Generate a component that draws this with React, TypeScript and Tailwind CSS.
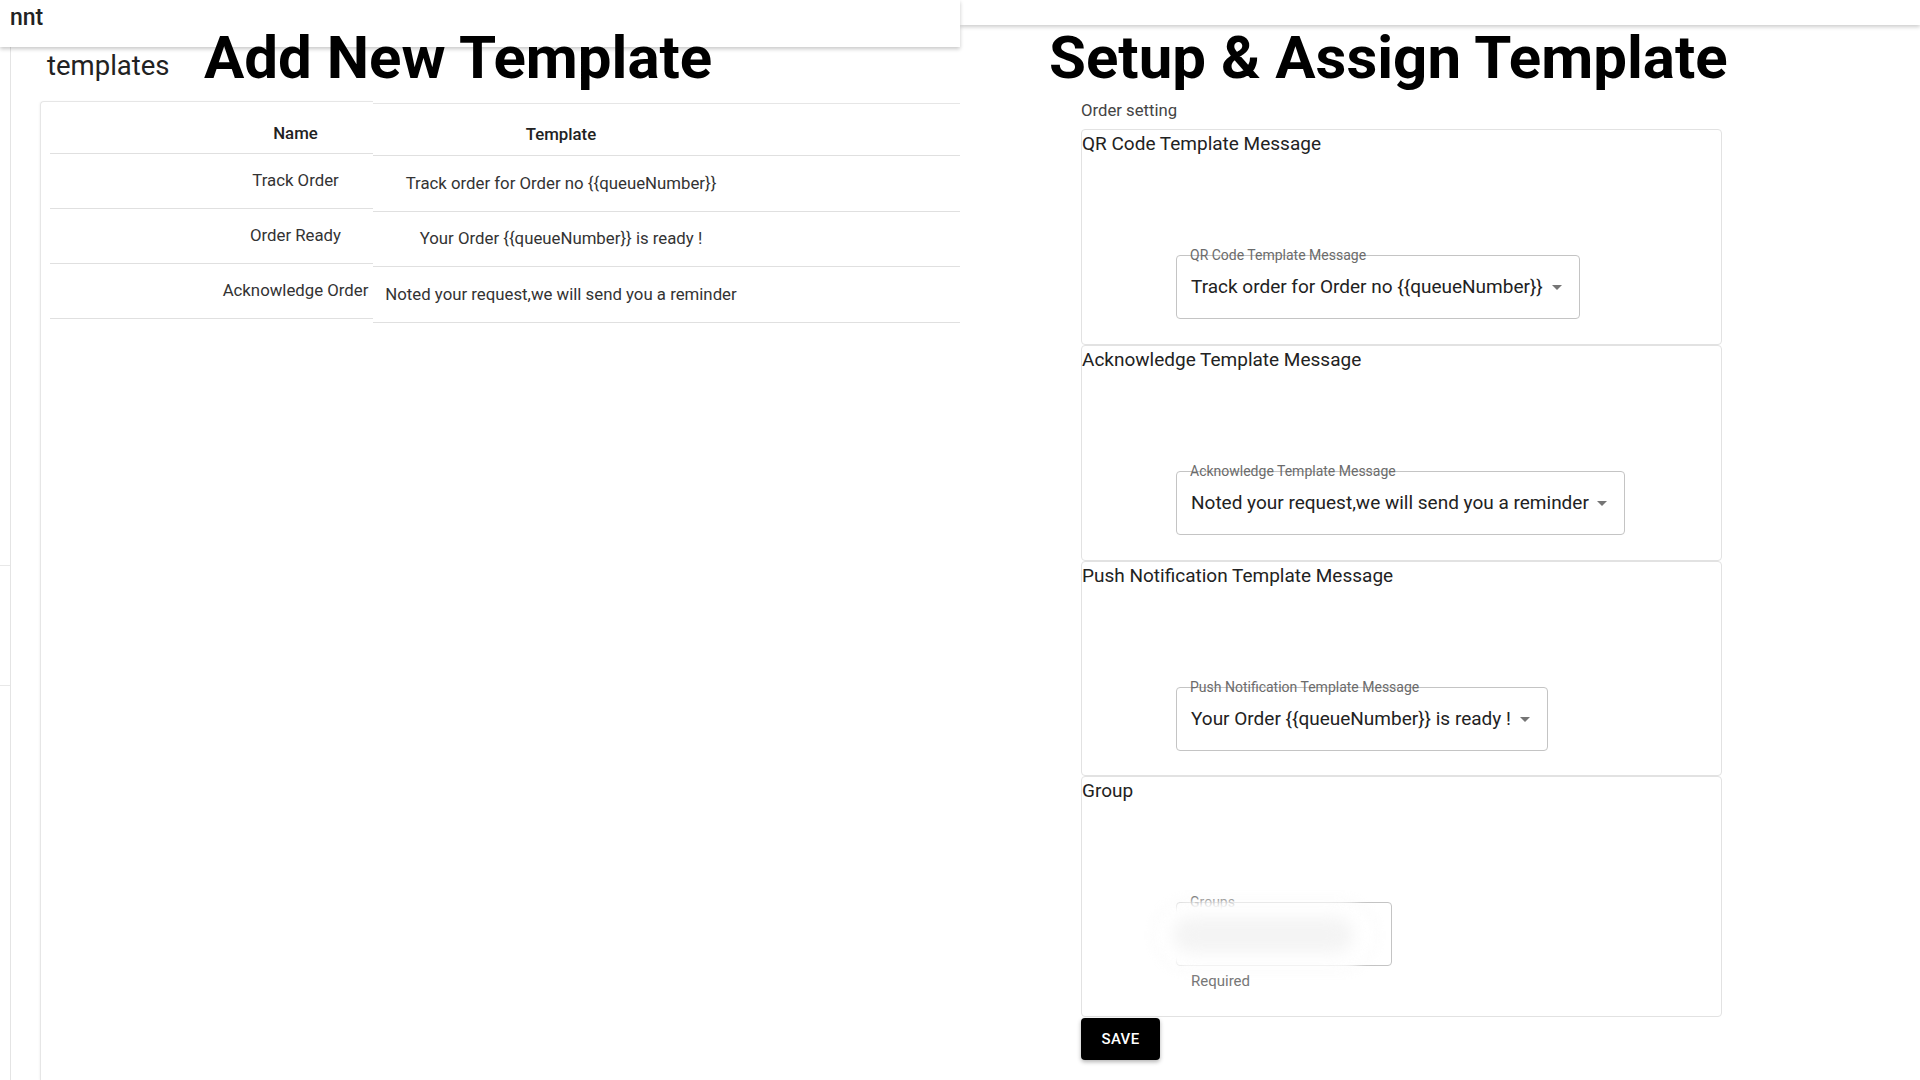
import { ReactNode } from 'react'

const rows = [
  { name: 'Track Order', template: 'Track order for Order no {{queueNumber}}' },
  { name: 'Order Ready', template: 'Your Order {{queueNumber}} is ready !' },
  { name: 'Acknowledge Order', template: 'Noted your request,we will send you a reminder' },
]

function Caret() {
  return (
    <svg width="10" height="5" viewBox="0 0 10 5" className="shrink-0">
      <path d="M0 0L5 5L10 0Z" fill="#757575" />
    </svg>
  )
}

interface SelectBoxProps {
  label: string
  value?: string
  width: string
  children?: ReactNode
}

function SelectBox({ label, value, width, children }: SelectBoxProps) {
  return (
    <div className={`relative flex h-[64px] items-center justify-between rounded-[4px] border border-[#c4c4c4] pl-[14px] pr-[17px] ${width}`}>
      <span className="absolute -top-[10px] left-[13px] text-[14px] leading-[18px] text-[#6b6b6b]">{label}</span>
      {value && <span className="whitespace-nowrap text-[19px] text-[#222]">{value}</span>}
      {value && <Caret />}
      {children}
    </div>
  )
}

interface SettingCardProps {
  title: string
  height: string
  children: ReactNode
}

function SettingCard({ title, height, children }: SettingCardProps) {
  return (
    <div className={`rounded-[4px] border border-[#e2e2e2] bg-white ${height}`}>
      <p className="h-[28px] text-[19px] leading-[28px] text-[#222]">{title}</p>
      <div className="ml-[94px] mt-[97px]">{children}</div>
    </div>
  )
}

function TemplatesScreen() {
  return (
    <div className="flex h-full w-[960px] flex-col">
      <div className="relative z-10 h-[47px] bg-white pl-[10px] shadow-[0_2px_4px_rgba(0,0,0,0.22)]">
        <span className="text-[23px] font-medium leading-[36px] text-[#222]">nnt</span>
      </div>
      <div className="flex flex-1">
        <div className="flex w-[11px] flex-col border-r border-[#e4e4e4]">
          <div className="h-[519px] border-b border-[#e8e8e8]" />
          <div className="h-[120px] border-b border-[#e8e8e8]" />
        </div>
        <div className="flex-1 pl-[29px]">
          <p className="h-[54px] pl-[7px] pt-[2px] text-[27.5px] leading-[34px] text-[#222]">templates</p>
          <div className="flex h-[979px]">
            <div className="w-[333px] rounded-tl-[4px] border-l border-t border-[#e6e6e6] pl-[9px] shadow-[-1px_0_2px_rgba(0,0,0,0.04)]">
              <div className="flex h-[52px] items-center justify-end border-b border-[#e0e0e0] pt-[12px]">
                <span className="w-[155px] text-center text-[16.8px] font-medium text-[#222]">Name</span>
              </div>
              {rows.map((r) => (
                <div key={r.name} className="flex h-[55px] items-center justify-end border-b border-[#e0e0e0]">
                  <span className="w-[155px] text-center text-[16.8px] whitespace-nowrap text-[#333]">{r.name}</span>
                </div>
              ))}
            </div>
            <div className="mt-[2px] flex-1 border-t border-[#e6e6e6]">
              <div className="flex h-[52px] items-center border-b border-[#e0e0e0] pt-[10px]">
                <span className="w-[376px] text-center text-[16.8px] font-medium text-[#222]">Template</span>
              </div>
              {rows.map((r) => (
                <div key={r.name} className="flex h-[55.5px] items-center border-b border-[#e0e0e0]">
                  <span className="w-[376px] text-center text-[16.8px] whitespace-nowrap text-[#333]">{r.template}</span>
                </div>
              ))}
            </div>
          </div>
        </div>
      </div>
    </div>
  )
}

function SetupScreen() {
  return (
    <div className="flex h-full w-[960px] flex-col">
      <div className="h-[25px] bg-white shadow-[0_2px_4px_rgba(0,0,0,0.2)]" />
      <div className="pl-[121px] pt-[76px]">
        <p className="text-[16.7px] leading-[20px] text-[#444]">Order setting</p>
        <div className="mt-[8px] w-[641px]">
          <SettingCard title="QR Code Template Message" height="h-[216px]">
            <SelectBox label="QR Code Template Message" value="Track order for Order no {{queueNumber}}" width="w-[404px]" />
          </SettingCard>
          <SettingCard title="Acknowledge Template Message" height="h-[216px]">
            <SelectBox label="Acknowledge Template Message" value="Noted your request,we will send you a reminder" width="w-[449px]" />
          </SettingCard>
          <SettingCard title="Push Notification Template Message" height="h-[215px]">
            <SelectBox label="Push Notification Template Message" value="Your Order {{queueNumber}} is ready !" width="w-[372px]" />
          </SettingCard>
          <SettingCard title="Group" height="h-[241px]">
            <SelectBox label="Groups" width="w-[216px]">
              {/* redaction smudge over the field */}
              <div className="absolute -left-[22px] -top-[2px] h-[68px] w-[220px] rounded-[34px] bg-white shadow-[0_0_10px_rgba(0,0,0,0.05)] blur-[4px]" />
              <div className="absolute -left-[4px] top-[14px] h-[36px] w-[180px] rounded-[24px] bg-[#f4f4f4] blur-[8px]" />
            </SelectBox>
            <p className="ml-[15px] mt-[7px] text-[15px] leading-[16px] text-[#777]">Required</p>
          </SettingCard>
        </div>
        <button className="mt-[1px] h-[42px] w-[79px] rounded-[4px] bg-black text-[15px] font-medium tracking-wide text-white shadow-[0_2px_4px_rgba(0,0,0,0.3)]">
          SAVE
        </button>
      </div>
    </div>
  )
}

export default function App() {
  return (
    <div className="relative flex h-[1080px] w-[1920px] overflow-hidden bg-white font-['Roboto',sans-serif]">
      <TemplatesScreen />
      <SetupScreen />
      <h1 className="absolute left-[204px] top-[28px] z-20 text-[60px] font-bold leading-[60px] text-black">Add New Template</h1>
      <h1 className="absolute left-[1049px] top-[28px] z-20 text-[60px] font-bold leading-[60px] text-black">Setup &amp; Assign Template</h1>
    </div>
  )
}
